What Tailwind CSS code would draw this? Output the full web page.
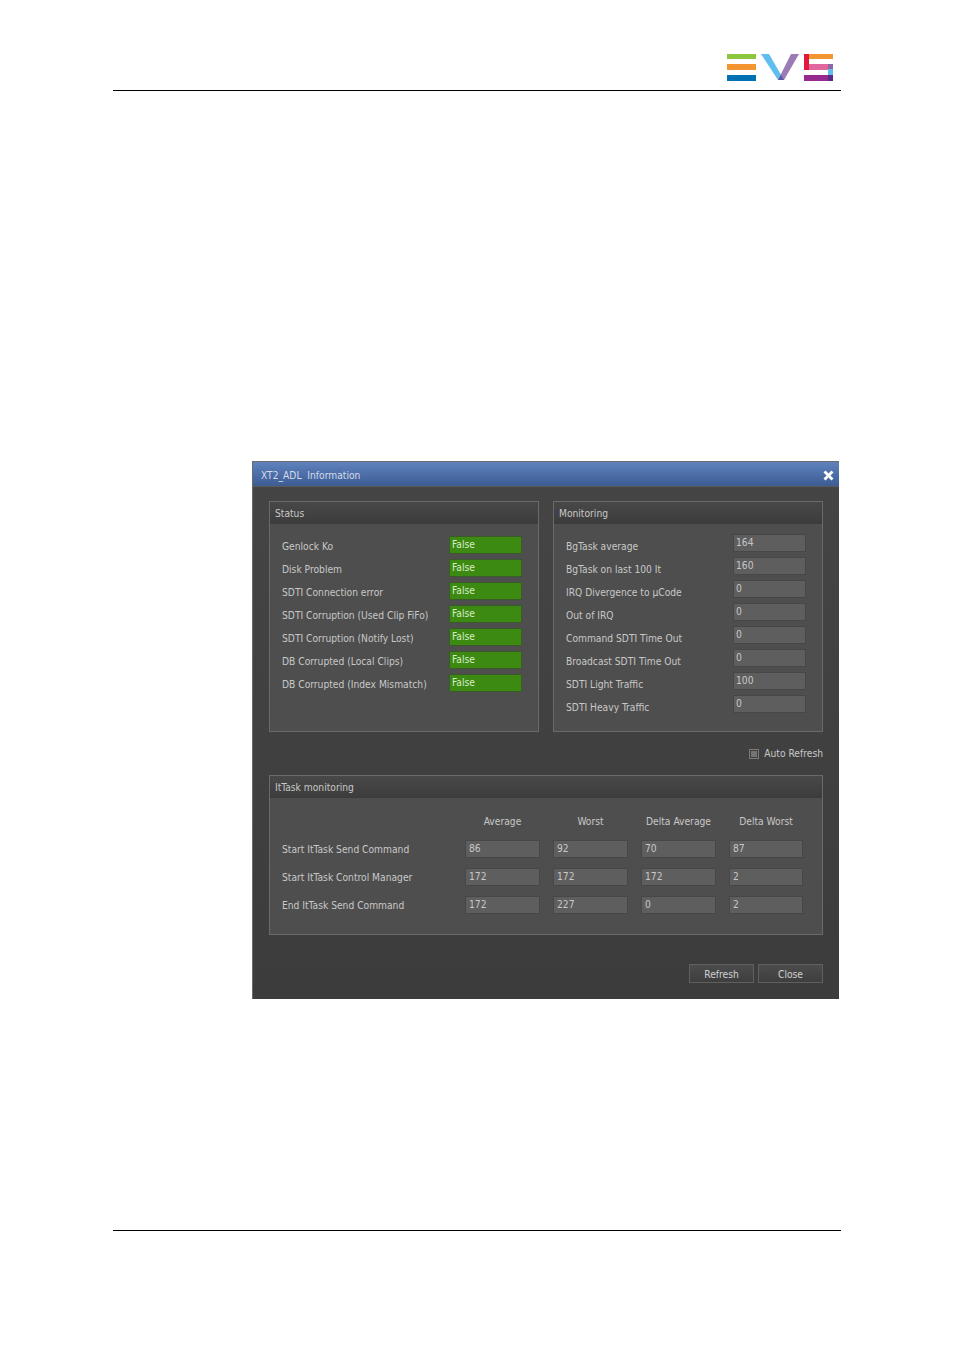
<!DOCTYPE html>
<html lang="en">
<head>
  <meta charset="UTF-8" />
  <title>XT2_ADL Information</title>
  <script src="https://cdn.jsdelivr.net/npm/@tailwindcss/browser@4"></script>
</head>
<body class="bg-white font-['DejaVu_Sans_Condensed','DejaVu_Sans',sans-serif]">
<div class="w-[954px] h-[1349px] flex flex-col overflow-hidden">

  <!-- Page header -->
  <header class="ml-[113px] w-[728px] h-[91px] border-b border-black flex justify-end items-start pt-[53px] pr-[8px] shrink-0">
    <svg width="106" height="29" viewBox="0 0 106 29">
      <rect x="0" y="1" width="29" height="5" fill="#8dc63f"/>
      <rect x="0" y="11" width="29" height="6" fill="#f39530"/>
      <rect x="0" y="22" width="29" height="6" fill="#0071b3"/>
      <polygon points="34,1 42,1 57,27 51,27" fill="#5fbfec"/>
      <polygon points="64,1 72,1 57,27 51,27" fill="#9a7bb3"/>
      <polygon points="51,27 57,27 54,22" fill="#5b5aa5"/>
      <rect x="82" y="1" width="24" height="5" fill="#f39530"/>
      <rect x="77" y="1" width="5" height="16" fill="#e4173e"/>
      <rect x="82" y="11" width="19" height="6" fill="#e0689f"/>
      <rect x="101" y="11" width="5" height="5" fill="#8e67a6"/>
      <rect x="101" y="16" width="5" height="6" fill="#5fbfec"/>
      <rect x="77" y="22" width="24" height="6" fill="#962a8f"/>
      <rect x="101" y="22" width="5" height="6" fill="#5c2a86"/>
    </svg>
  </header>

  <!-- Dialog -->
  <section class="ml-[252px] mt-[370px] w-[587px] h-[538px] shrink-0 flex flex-col border-l border-t border-[#6b6b6b] bg-linear-to-b from-[#454545] to-[#3c3c3c] text-[10.2px] leading-none text-[#c8c8c8]">
    <div class="h-[25px] shrink-0 flex items-center justify-between pl-[8px] pr-[5px] bg-linear-to-b from-[#5f82bd] to-[#3d5c94] border-b border-[#5a5a5a] text-[#d5dce8]">
      <span class="whitespace-pre mt-[5px]">XT2_ADL  Information</span>
      <svg width="11" height="11" viewBox="0 0 11 11" class="mt-[3px]"><path d="M1.5 1.5 9.5 9.5M9.5 1.5 1.5 9.5" stroke="#fff" stroke-width="2.8"/></svg>
    </div>

    <div class="flex-1 flex flex-col pl-[16px] pr-[16px] pt-[14px]">
      <div class="grid grid-cols-[270px_270px] gap-x-[14px]">

        <!-- Status -->
        <div class="h-[231px] border border-[#6a6a6a] bg-[#4e4e4e]">
          <div class="h-[22px] pl-[5px] pt-[2px] flex items-center bg-linear-to-b from-[#484848] to-[#3c3c3c]">Status</div>
          <div class="pl-[12px] pr-[16px] pt-[12px] flex flex-col gap-[5px]">
            <div class="h-[18px] flex justify-between items-center"><span class="mt-[4px]">Genlock Ko</span><span class="w-[73px] h-[18px] pl-[2px] pt-[3px] bg-[#3c8a12] border border-[#3a5a2a] text-[#d8ecc8]">False</span></div>
            <div class="h-[18px] flex justify-between items-center"><span class="mt-[4px]">Disk Problem</span><span class="w-[73px] h-[18px] pl-[2px] pt-[3px] bg-[#3c8a12] border border-[#3a5a2a] text-[#d8ecc8]">False</span></div>
            <div class="h-[18px] flex justify-between items-center"><span class="mt-[4px]">SDTI Connection error</span><span class="w-[73px] h-[18px] pl-[2px] pt-[3px] bg-[#3c8a12] border border-[#3a5a2a] text-[#d8ecc8]">False</span></div>
            <div class="h-[18px] flex justify-between items-center"><span class="mt-[4px]">SDTI Corruption (Used Clip FiFo)</span><span class="w-[73px] h-[18px] pl-[2px] pt-[3px] bg-[#3c8a12] border border-[#3a5a2a] text-[#d8ecc8]">False</span></div>
            <div class="h-[18px] flex justify-between items-center"><span class="mt-[4px]">SDTI Corruption (Notify Lost)</span><span class="w-[73px] h-[18px] pl-[2px] pt-[3px] bg-[#3c8a12] border border-[#3a5a2a] text-[#d8ecc8]">False</span></div>
            <div class="h-[18px] flex justify-between items-center"><span class="mt-[4px]">DB Corrupted (Local Clips)</span><span class="w-[73px] h-[18px] pl-[2px] pt-[3px] bg-[#3c8a12] border border-[#3a5a2a] text-[#d8ecc8]">False</span></div>
            <div class="h-[18px] flex justify-between items-center"><span class="mt-[4px]">DB Corrupted (Index Mismatch)</span><span class="w-[73px] h-[18px] pl-[2px] pt-[3px] bg-[#3c8a12] border border-[#3a5a2a] text-[#d8ecc8]">False</span></div>
          </div>
        </div>

        <!-- Monitoring -->
        <div class="h-[231px] border border-[#6a6a6a] bg-[#4e4e4e]">
          <div class="h-[22px] pl-[5px] pt-[2px] flex items-center bg-linear-to-b from-[#484848] to-[#3c3c3c]">Monitoring</div>
          <div class="pl-[12px] pr-[16px] pt-[10px] flex flex-col gap-[5px]">
            <div class="h-[18px] flex justify-between items-start"><span class="mt-[8px]">BgTask average</span><span class="w-[73px] h-[18px] pl-[2px] pt-[3px] bg-[#5e5e5e] border border-[#474747]">164</span></div>
            <div class="h-[18px] flex justify-between items-start"><span class="mt-[8px]">BgTask on last 100 It</span><span class="w-[73px] h-[18px] pl-[2px] pt-[3px] bg-[#5e5e5e] border border-[#474747]">160</span></div>
            <div class="h-[18px] flex justify-between items-start"><span class="mt-[8px]">IRQ Divergence to µCode</span><span class="w-[73px] h-[18px] pl-[2px] pt-[3px] bg-[#5e5e5e] border border-[#474747]">0</span></div>
            <div class="h-[18px] flex justify-between items-start"><span class="mt-[8px]">Out of IRQ</span><span class="w-[73px] h-[18px] pl-[2px] pt-[3px] bg-[#5e5e5e] border border-[#474747]">0</span></div>
            <div class="h-[18px] flex justify-between items-start"><span class="mt-[8px]">Command SDTI Time Out</span><span class="w-[73px] h-[18px] pl-[2px] pt-[3px] bg-[#5e5e5e] border border-[#474747]">0</span></div>
            <div class="h-[18px] flex justify-between items-start"><span class="mt-[8px]">Broadcast SDTI Time Out</span><span class="w-[73px] h-[18px] pl-[2px] pt-[3px] bg-[#5e5e5e] border border-[#474747]">0</span></div>
            <div class="h-[18px] flex justify-between items-start"><span class="mt-[8px]">SDTI Light Traffic</span><span class="w-[73px] h-[18px] pl-[2px] pt-[3px] bg-[#5e5e5e] border border-[#474747]">100</span></div>
            <div class="h-[18px] flex justify-between items-start"><span class="mt-[8px]">SDTI Heavy Traffic</span><span class="w-[73px] h-[18px] pl-[2px] pt-[3px] bg-[#5e5e5e] border border-[#474747]">0</span></div>
          </div>
        </div>
      </div>

      <!-- Auto refresh -->
      <div class="h-[43px] flex justify-end items-start pt-[16px] gap-[5px]">
        <span class="w-[10px] h-[10px] mt-[1px] border border-[#7a7a7a] p-[1px]"><span class="block w-full h-full bg-[#747474]"></span></span>
        <span class="mt-[1px]">Auto Refresh</span>
      </div>

      <!-- ItTask monitoring -->
      <div class="h-[160px] w-[554px] border border-[#6a6a6a] bg-[#4e4e4e]">
        <div class="h-[22px] pl-[5px] pt-[2px] flex items-center bg-linear-to-b from-[#484848] to-[#3c3c3c]">ItTask monitoring</div>
        <div class="grid grid-cols-[170px_75px_75px_75px_74px] gap-x-[13px] pl-[12px] pt-[18px] items-center">
          <span></span><span class="h-[24px] pt-[1px] text-center">Average</span><span class="h-[24px] pt-[1px] text-center">Worst</span><span class="h-[24px] pt-[1px] text-center">Delta Average</span><span class="h-[24px] pt-[1px] text-center">Delta Worst</span>

          <span class="h-[28px] pt-[5px]">Start ItTask Send Command</span>
          <span class="h-[18px] mb-[10px] pl-[3px] pt-[3px] bg-[#5e5e5e] border border-[#474747]">86</span>
          <span class="h-[18px] mb-[10px] pl-[3px] pt-[3px] bg-[#5e5e5e] border border-[#474747]">92</span>
          <span class="h-[18px] mb-[10px] pl-[3px] pt-[3px] bg-[#5e5e5e] border border-[#474747]">70</span>
          <span class="h-[18px] mb-[10px] pl-[3px] pt-[3px] bg-[#5e5e5e] border border-[#474747]">87</span>

          <span class="h-[28px] pt-[5px]">Start ItTask Control Manager</span>
          <span class="h-[18px] mb-[10px] pl-[3px] pt-[3px] bg-[#5e5e5e] border border-[#474747]">172</span>
          <span class="h-[18px] mb-[10px] pl-[3px] pt-[3px] bg-[#5e5e5e] border border-[#474747]">172</span>
          <span class="h-[18px] mb-[10px] pl-[3px] pt-[3px] bg-[#5e5e5e] border border-[#474747]">172</span>
          <span class="h-[18px] mb-[10px] pl-[3px] pt-[3px] bg-[#5e5e5e] border border-[#474747]">2</span>

          <span class="h-[28px] pt-[5px]">End ItTask Send Command</span>
          <span class="h-[18px] mb-[10px] pl-[3px] pt-[3px] bg-[#5e5e5e] border border-[#474747]">172</span>
          <span class="h-[18px] mb-[10px] pl-[3px] pt-[3px] bg-[#5e5e5e] border border-[#474747]">227</span>
          <span class="h-[18px] mb-[10px] pl-[3px] pt-[3px] bg-[#5e5e5e] border border-[#474747]">0</span>
          <span class="h-[18px] mb-[10px] pl-[3px] pt-[3px] bg-[#5e5e5e] border border-[#474747]">2</span>
        </div>
      </div>

      <!-- Buttons -->
      <div class="w-[554px] flex justify-end gap-[4px] mt-[29px]">
        <button class="w-[65px] h-[19px] pt-[4px] border border-[#5f5f5f] bg-linear-to-b from-[#4c4c4c] to-[#3e3e3e] text-[#d0d0d0]">Refresh</button>
        <button class="w-[65px] h-[19px] pt-[4px] border border-[#5f5f5f] bg-linear-to-b from-[#4c4c4c] to-[#3e3e3e] text-[#d0d0d0]">Close</button>
      </div>
    </div>
  </section>

  <!-- Page footer rule -->
  <div class="ml-[113px] mt-[231px] w-[728px] border-t border-black shrink-0"></div>
</div>
</body>
</html>
